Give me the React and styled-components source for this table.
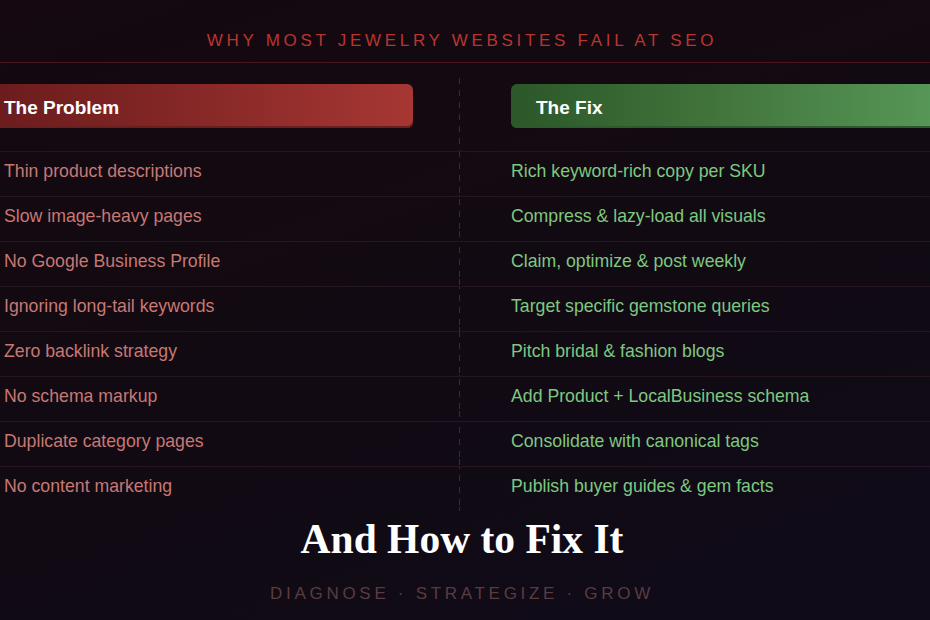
import React from "react";
import styled, { createGlobalStyle } from "styled-components";

const Global = createGlobalStyle`
  html, body { margin: 0; padding: 0; background: #110a12; }
  body { font-family: "Liberation Sans", Arial, sans-serif; }
`;

const Page = styled.div`
  width: 930px;
  height: 620px;
  overflow: hidden;
  background: linear-gradient(160deg, #150810 0%, #120a12 45%, #0f0b19 100%);
  display: flex;
  flex-direction: column;
  align-items: stretch;
`;

const Kicker = styled.h2`
  margin: 0;
  padding: 31px 6px 11px 0;
  text-align: center;
  font-family: "Liberation Sans", Arial, sans-serif;
  font-weight: 400;
  font-size: 17px;
  line-height: 20px;
  letter-spacing: 3.7px;
  color: #b8362f;
  border-bottom: 1px solid #4a1419;
`;

const Table = styled.div`
  display: flex;
  flex-direction: column;
  margin: 15px 0 0 -21px;
  width: 990px;
`;

const Row = styled.div`
  display: grid;
  grid-template-columns: 434px 46px 1px 51px 458px;
  border-top: ${(p) => (p.$head ? "none" : "1px solid #251520")};
  height: ${(p) => (p.$head ? "73px" : "44px")};
`;

const Divider = styled.div`
  grid-column: 3;
  background: repeating-linear-gradient(
    to bottom,
    #3a2a34 0px,
    #3a2a34 6px,
    transparent 6px,
    transparent 12px
  );
  background-position: 0 ${(p) => p.$offset || 0}px;
`;

const HeadCell = styled.div`
  grid-column: ${(p) => (p.$fix ? 5 : 1)};
  padding-top: 6px;
`;

const HeadBox = styled.div`
  height: 44px;
  box-sizing: border-box;
  border-radius: 6px;
  display: flex;
  align-items: center;
  padding: 3px 0 0 25px;
  font-family: "Liberation Sans", Arial, sans-serif;
  font-weight: 700;
  font-size: 19px;
  color: #ffffff;
  background: ${(p) =>
    p.$fix
      ? "linear-gradient(90deg, #2c5729 0%, #3f7139 40%, #5a9c5b 100%)"
      : "linear-gradient(90deg, #6a1b1c 0%, #862827 50%, #a63733 100%)"};
  box-shadow: inset 0 -2px 0 ${(p) => (p.$fix ? "#2d5a2c" : "#6a1f1f")};
`;

const Cell = styled.div`
  grid-column: ${(p) => (p.$fix ? 5 : 1)};
  padding-left: ${(p) => (p.$fix ? "0" : "25px")};
  padding-top: 8px;
  font-family: "Liberation Sans", Arial, sans-serif;
  font-size: 17.7px;
  line-height: 22px;
  color: ${(p) => (p.$fix ? "#7ec880" : "#c77874")};
`;

const Headline = styled.h1`
  margin: 5px 0 0;
  padding-right: 6px;
  text-align: center;
  font-family: "Liberation Serif", "Times New Roman", serif;
  font-weight: 700;
  font-size: 41.5px;
  line-height: 46px;
  color: #ffffff;
`;

const Tagline = styled.div`
  margin-top: 22px;
  padding-right: 6px;
  text-align: center;
  font-family: "Liberation Sans", Arial, sans-serif;
  font-size: 17px;
  line-height: 20px;
  letter-spacing: 3.7px;
  color: #5a3c3e;
`;

const rows = [
  ["Thin product descriptions", "Rich keyword-rich copy per SKU"],
  ["Slow image-heavy pages", "Compress & lazy-load all visuals"],
  ["No Google Business Profile", "Claim, optimize & post weekly"],
  ["Ignoring long-tail keywords", "Target specific gemstone queries"],
  ["Zero backlink strategy", "Pitch bridal & fashion blogs"],
  ["No schema markup", "Add Product + LocalBusiness schema"],
  ["Duplicate category pages", "Consolidate with canonical tags"],
  ["No content marketing", "Publish buyer guides & gem facts"],
];

export default function App() {
  return (
    <Page>
      <Global />
      <Kicker>WHY MOST JEWELRY WEBSITES FAIL AT SEO</Kicker>
      <Table>
        <Row $head>
          <HeadCell>
            <HeadBox>The Problem</HeadBox>
          </HeadCell>
          <Divider />
          <HeadCell $fix>
            <HeadBox $fix>The Fix</HeadBox>
          </HeadCell>
        </Row>
        {rows.map(([a, b], i) => (
          <Row key={i}>
            <Cell>{a}</Cell>
            <Divider $offset={-((73 + i * 45) % 12)} />
            <Cell $fix>{b}</Cell>
          </Row>
        ))}
      </Table>
      <Headline>And How to Fix It</Headline>
      <Tagline>DIAGNOSE · STRATEGIZE · GROW</Tagline>
    </Page>
  );
}
